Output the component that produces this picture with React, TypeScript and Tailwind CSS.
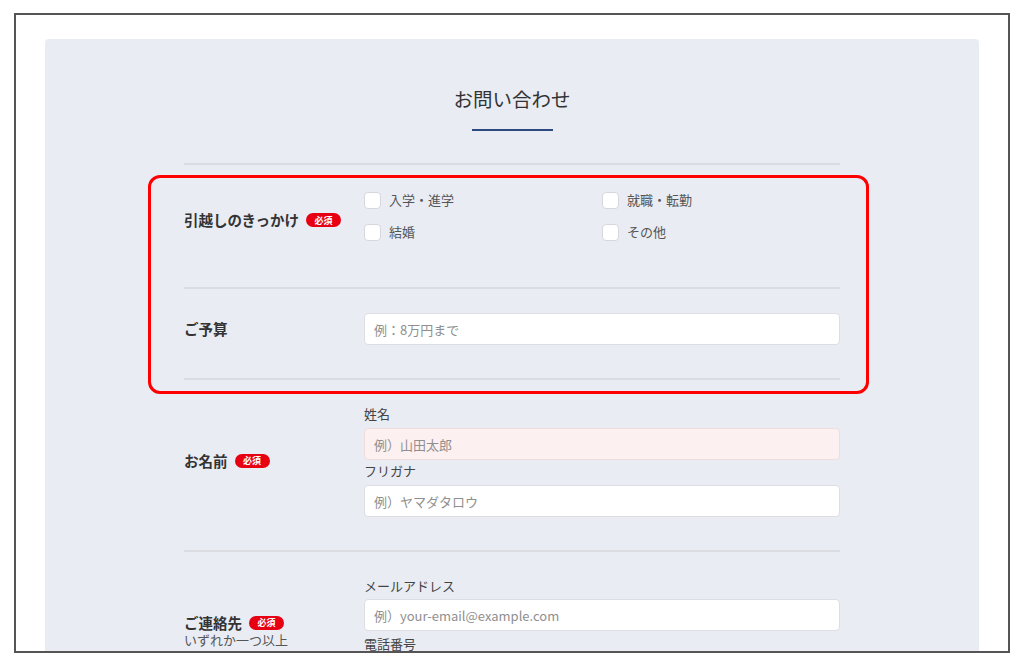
import React from "react";

const font = { fontFamily: '"Noto Sans CJK JP", "Noto Sans", sans-serif' };

const Required = () => (
  <span className="ml-[7px] inline-flex h-[14px] w-[35px] items-center justify-center rounded-full bg-[#e60012] text-[9px] font-bold leading-none text-white">
    必須
  </span>
);

const Divider = () => <div className="h-[2px] w-full bg-[#dadce2]" />;

type FieldProps = {
  placeholder: string;
  pink?: boolean;
};

const Field = ({ placeholder, pink }: FieldProps) => (
  <input
    type="text"
    placeholder={placeholder}
    className={`h-8 w-full rounded-[4px] border px-[9px] text-[13px] text-[#333] outline-none placeholder:text-[#8f8f8f] ${
      pink ? "border-[#f1dcdc] bg-[#fdf0f0]" : "border-[#dcdee3] bg-white"
    }`}
  />
);

const Check = ({ label }: { label: string }) => (
  <label className="flex h-4 items-center gap-2 text-[13px] text-[#555]">
    <span className="h-[17px] w-[17px] rounded-[4px] border border-[#d6d8de] bg-white" />
    {label}
  </label>
);

const SubLabel = ({ children }: { children: React.ReactNode }) => (
  <p className="h-5 text-[13px] leading-5 text-[#444]">{children}</p>
);

export default function App() {
  return (
    <div className="h-[663px] w-full overflow-hidden bg-white pt-[13px] pl-[14px]" style={font}>
      <div className="h-[640px] w-[996px] overflow-hidden border-2 border-[#555] bg-white px-[29px] pt-[24px]">
        <div className="relative rounded-t-[4px] bg-[#e9ecf3] pt-[48px] pb-20">
          <h2 className="text-center text-[19.5px] leading-6 font-normal text-[#333]">お問い合わせ</h2>
          <div className="mx-auto mt-[18px] h-[2px] w-[81px] bg-[#2c4a80]" />

          <div className="mx-auto mt-[32px] w-[656px]">
            <Divider />

            {/* きっかけ */}
            <div className="flex items-center pt-[27px] pb-[39px]">
              <div className="flex w-[180px] items-center text-[14.5px] font-bold text-[#333]">
                引越しのきっかけ
                <Required />
              </div>
              <div className="grid flex-1 grid-cols-2 gap-y-4 pb-2">
                <Check label="入学・進学" />
                <Check label="就職・転勤" />
                <Check label="結婚" />
                <Check label="その他" />
              </div>
            </div>

            <Divider />

            {/* 予算 */}
            <div className="flex items-center pt-6 pb-[33px]">
              <div className="w-[180px] text-[14.5px] font-bold text-[#333]">ご予算</div>
              <div className="flex-1">
                <Field placeholder="例：8万円まで" />
              </div>
            </div>

            <Divider />

            {/* 名前 */}
            <div className="flex items-center pt-[24px] pb-[33px]">
              <div className="flex w-[180px] items-center text-[14.5px] font-bold text-[#333]">
                お名前
                <Required />
              </div>
              <div className="flex-1">
                <SubLabel>姓名</SubLabel>
                <div className="mt-1">
                  <Field placeholder="例）山田太郎" pink />
                </div>
                <div className="mt-[1px]">
                  <SubLabel>フリガナ</SubLabel>
                </div>
                <div className="mt-1">
                  <Field placeholder="例）ヤマダタロウ" />
                </div>
              </div>
            </div>

            <Divider />

            {/* 連絡先 */}
            <div className="flex items-center pt-[24px] pb-[33px]">
              <div className="w-[180px] pb-[6px]">
                <div className="flex h-[18px] items-center text-[14.5px] leading-[18px] font-bold text-[#333]">
                  ご連絡先
                  <Required />
                </div>
                <p className="text-[13px] leading-[15px] text-[#555]">いずれか一つ以上</p>
              </div>
              <div className="flex-1">
                <SubLabel>メールアドレス</SubLabel>
                <div className="mt-[3px]">
                  <Field placeholder="例）your-email@example.com" />
                </div>
                <div className="mt-[3px]">
                  <SubLabel>電話番号</SubLabel>
                </div>
                <div className="mt-1">
                  <Field placeholder="例）090-1234-5678" />
                </div>
              </div>
            </div>
          </div>

          {/* highlight around the first two rows */}
          <div className="pointer-events-none absolute top-[136px] left-[103px] h-[219px] w-[721px] rounded-[12px] border-[3px] border-[#ff0000]" />
        </div>
      </div>
    </div>
  );
}
